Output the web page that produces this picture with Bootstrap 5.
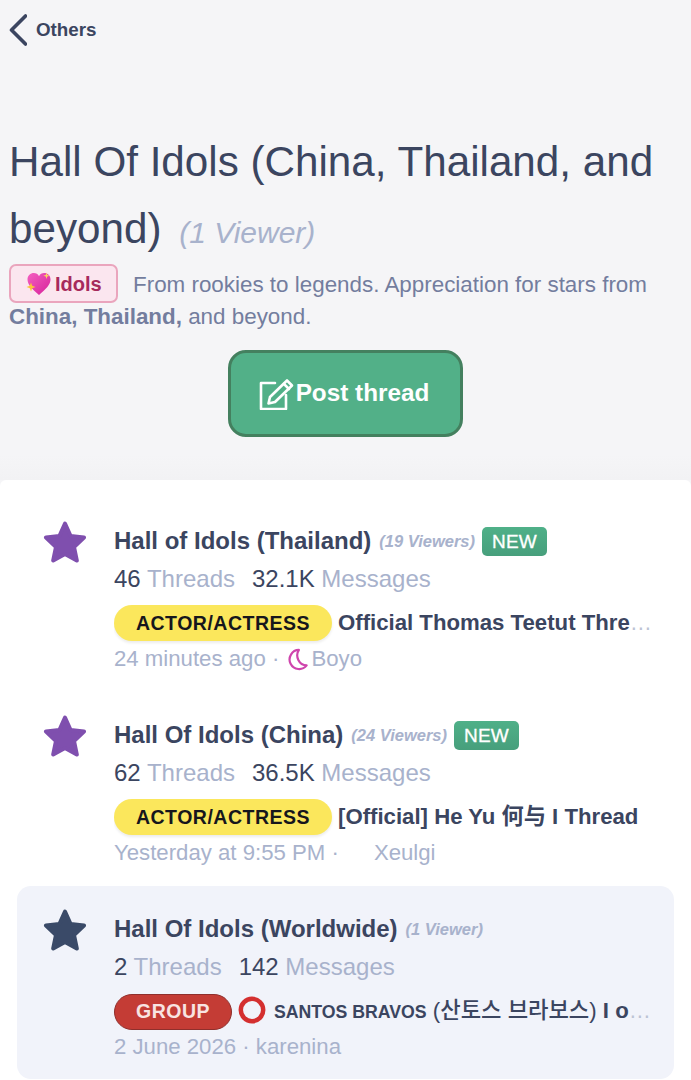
<!DOCTYPE html>
<html lang="en">
<head>
<meta charset="utf-8">
<title>Hall Of Idols</title>
<link href="https://cdn.jsdelivr.net/npm/bootstrap@5.3.0/dist/css/bootstrap.min.css" rel="stylesheet">
<style>
html,body{height:1080px;overflow:hidden}
body{background:#f5f5f7;font-family:"Liberation Sans","Noto Sans CJK KR",sans-serif;color:#3b4560}
.cjk-sc{font-family:"Liberation Sans","Noto Sans CJK SC",sans-serif}
.cjk-kr{font-family:"Liberation Sans","Noto Sans CJK KR",sans-serif}
.top-area{height:480px;padding:14px 9px 0;background:linear-gradient(#f5f5f7 455px,#f2f2f4 480px)}
.back-link{height:32px;gap:9px;color:#3b4560;font-size:18.800px;font-weight:700;text-decoration:none}
.back-link span{padding-top:1px}
.page-title{margin:82px 0 0;font-size:42.200px;line-height:67px;font-weight:400;color:#3b4560}
.viewer-big{font-size:30px;font-style:italic;color:#a8b2cc;margin-left:6px}
.desc-line{margin-top:-2px;font-size:22.400px;line-height:32px;color:#737d9e}
.desc-line strong{font-weight:700}
.idol-tag{display:inline-flex;align-items:center;gap:3px;height:39px;width:109px;padding-left:15px;margin:0 15px -2px 0;vertical-align:-5px;background:#fbe6ef;border:2px solid #eaa5bd;border-radius:7px;color:#a62a5c;font-size:20px;font-weight:700}
.post-btn{width:235px;height:87px;margin-top:17px;padding:0 4px 0 0;gap:2px;border:3px solid #44805f;border-radius:18px;background:#52b088;color:#fff;font-size:24.300px;font-weight:700}
.post-btn:hover{background:#52b088;color:#fff;border-color:#44805f}
.list-area{height:600px;padding:18px 17px 0;background:#fff;border-radius:6px 6px 0 0}
.forum-row{height:193px;margin-bottom:1px;padding:23px 18px 0 26px;gap:27px;border-radius:14px}
.forum-row.is-read{background:#f1f3fa}
.star-box{flex:0 0 44px;width:44px;height:44px}
.row-main{min-width:0;flex:1}
.row-title{height:40px;gap:8px;font-size:24px;font-weight:700;color:#3b4560;white-space:nowrap}
.viewer-small{font-size:16.500px;font-style:italic;font-weight:700;color:#a8b2cc}
.new-tag{display:inline-block;padding:0 10px;height:29px;line-height:29px;margin:1px 0 0 -1px;border-radius:5px;background:linear-gradient(#4fb088,#479f7c);color:#fff;font-size:19px;font-weight:400;letter-spacing:.2px;-webkit-text-stroke:.3px #fff}
.row-stats{height:36px;line-height:36px;font-size:24px;color:#a8b2cc;white-space:nowrap}
.row-stats b{font-weight:400;color:#3b4560}
.row-stats .stat-gap{margin-left:17px}
.row-latest{height:48px;padding-top:4px;line-height:44px;font-size:22.200px;color:#bcc3d4;font-weight:400;white-space:nowrap;overflow:hidden;text-overflow:ellipsis}
.row-latest .thread-name{color:#3b4560;font-weight:700}
.pill{display:inline-block;height:36px;line-height:36px;border-radius:18px;font-size:19.500px;font-weight:700;text-align:center;letter-spacing:.5px;margin-right:6px}
.pill-yellow{width:218px;background:#fbe75c;color:#16161c;box-shadow:0 2px 3px rgba(0,0,0,.08)}
.pill-red{width:118px;background:#c43c35;color:#f8e4e2;border:1px solid #8f2f2c;line-height:33px}
.ring-icon{vertical-align:-6px;margin-right:8px}
.caps-name{font-size:17.700px}
.kr-part{font-weight:500;font-size:22.200px}
.row-meta{height:30px;line-height:30px;margin-top:-1px;font-size:22.200px;color:#a8b2cc;white-space:nowrap}
.moon-icon{vertical-align:-6px;margin:0 3px 0 3px}
.gap-blank{display:inline-block;width:35px}
</style>
</head>
<body>
<div class="top-area">
  <a class="back-link d-flex align-items-center" href="#">
    <svg width="18" height="32" viewBox="0 0 18 32"><path d="M16.5 2 2.500 16l14 14" fill="none" stroke="#3b4560" stroke-width="3.600" stroke-linecap="round" stroke-linejoin="round"/></svg>
    <span>Others</span>
  </a>
  <h1 class="page-title">Hall Of Idols (China, Thailand, and beyond) <span class="viewer-big">(1 Viewer)</span></h1>
  <div class="desc-line"><span class="idol-tag"><svg width="26" height="26" viewBox="0 0 26 26"><defs><linearGradient id="hg" x1="0" y1="0" x2="1" y2="1"><stop offset="0" stop-color="#f45fc0"/><stop offset="1" stop-color="#d6229a"/></linearGradient></defs><path d="M13 24C6 18 1.500 13.500 1.500 8.500 1.500 4.500 4.500 2 7.800 2c2.400 0 4.200 1.200 5.200 3.200C14 3.200 15.800 2 18.200 2c3.300 0 6.300 2.500 6.300 6.500 0 5-4.500 9.500-11.500 15.500z" fill="url(#hg)"/><path d="M5 11.500 6.200 14.800 9.500 16 6.200 17.200 5 20.500 3.800 17.200.5 16 3.800 14.800z" fill="#fbc53d"/><path d="M20.500 1.500 21.300 4 23.800 4.800 21.300 5.600 20.500 8 19.700 5.600 17.200 4.800 19.700 4z" fill="#fbd45d"/></svg><span>Idols</span></span>From rookies to legends. Appreciation for stars from <strong>China, Thailand,</strong> and beyond.</div>
  <div class="text-center"><button class="btn post-btn d-inline-flex align-items-center justify-content-center" type="button">
    <svg width="36" height="32" viewBox="0 0 36 32" fill="none" stroke="#fff" stroke-width="2.600" stroke-linecap="round" stroke-linejoin="round"><path d="M17 5H3v26h25V17"/><path d="M12 19 29 2.500l5 5L17 24l-6.500 1.500z"/><path d="M26 6l5 5"/></svg>
    <span>Post thread</span></button></div>
</div>
<div class="list-area">
  <div class="forum-row d-flex">
    <div class="star-box"><svg width="44" height="44" viewBox="0 0 44 44"><path d="M22 2.500 27.600 15 41 16.500 31 26 33.800 39.500 22 33 10.200 39.500 13 26 3 16.500 16.400 15z" fill="#7f4fae" stroke="#7f4fae" stroke-width="4" stroke-linejoin="round"/></svg></div>
    <div class="row-main">
      <div class="row-title d-flex align-items-center"><span>Hall of Idols (Thailand)</span><span class="viewer-small">(19 Viewers)</span><span class="new-tag">NEW</span></div>
      <div class="row-stats"><b>46</b> Threads<span class="stat-gap"><b>32.1K</b> Messages</span></div>
      <div class="row-latest"><span class="pill pill-yellow">ACTOR/ACTRESS</span><span class="thread-name">Official Thomas Teetut Thread: Thomas</span></div>
      <div class="row-meta">24 minutes ago · <svg class="moon-icon" width="20" height="25" viewBox="0 0 22 25"><path d="M12 2A10.500 10.500 0 1 0 20.500 19 11 11 0 0 1 12 2z" fill="none" stroke="#cf45ad" stroke-width="2.400" stroke-linejoin="round"/></svg>Boyo</div>
    </div>
  </div>
  <div class="forum-row d-flex">
    <div class="star-box"><svg width="44" height="44" viewBox="0 0 44 44"><path d="M22 2.500 27.600 15 41 16.500 31 26 33.800 39.500 22 33 10.200 39.500 13 26 3 16.500 16.400 15z" fill="#7f4fae" stroke="#7f4fae" stroke-width="4" stroke-linejoin="round"/></svg></div>
    <div class="row-main">
      <div class="row-title d-flex align-items-center"><span>Hall Of Idols (China)</span><span class="viewer-small">(24 Viewers)</span><span class="new-tag">NEW</span></div>
      <div class="row-stats"><b>62</b> Threads<span class="stat-gap"><b>36.5K</b> Messages</span></div>
      <div class="row-latest"><span class="pill pill-yellow">ACTOR/ACTRESS</span><span class="thread-name cjk-sc">[Official] He Yu 何与 I Thread</span></div>
      <div class="row-meta">Yesterday at 9:55 PM ·<span class="gap-blank"></span>Xeulgi</div>
    </div>
  </div>
  <div class="forum-row is-read d-flex">
    <div class="star-box"><svg width="44" height="44" viewBox="0 0 44 44"><path d="M22 2.500 27.600 15 41 16.500 31 26 33.800 39.500 22 33 10.200 39.500 13 26 3 16.500 16.400 15z" fill="#3a4a68" stroke="#3a4a68" stroke-width="4" stroke-linejoin="round"/></svg></div>
    <div class="row-main">
      <div class="row-title d-flex align-items-center"><span>Hall Of Idols (Worldwide)</span><span class="viewer-small">(1 Viewer)</span></div>
      <div class="row-stats"><b>2</b> Threads<span class="stat-gap"><b>142</b> Messages</span></div>
      <div class="row-latest"><span class="pill pill-red">GROUP</span><svg class="ring-icon" width="28" height="28" viewBox="0 0 28 28"><circle cx="14" cy="14" r="11.200" fill="none" stroke="#d42f2f" stroke-width="4.500"/></svg><span class="thread-name cjk-kr"><span class="caps-name">SANTOS BRAVOS</span> <span class="kr-part">(산토스 브라보스)</span> I official thread</span></div>
      <div class="row-meta">2 June 2026 · karenina</div>
    </div>
  </div>
</div>
<script src="https://cdn.jsdelivr.net/npm/bootstrap@5.3.0/dist/js/bootstrap.bundle.min.js"></script>
</body>
</html>
